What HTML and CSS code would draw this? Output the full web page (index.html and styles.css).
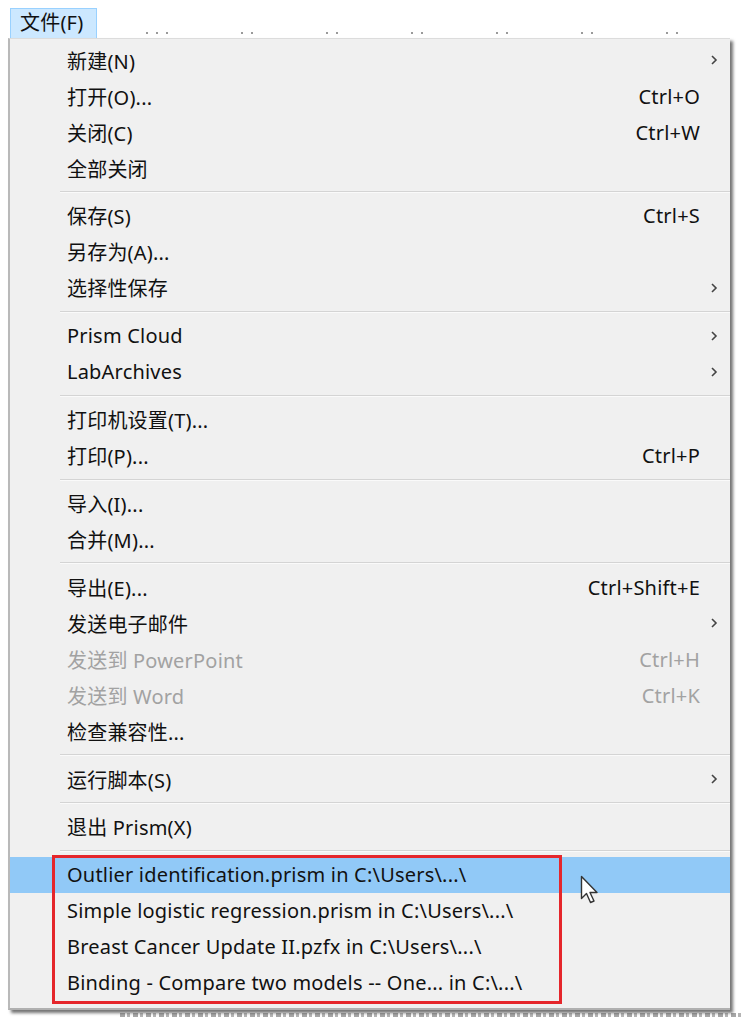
FILE: index.html
```html
<!DOCTYPE html>
<html lang="zh-CN">
<head>
    <meta charset="UTF-8">
    <title>文件菜单</title>
    <link rel="stylesheet" href="styles.css">
</head>
<body>
    <div class="menubar">
        <div class="tab">文件(F)</div>
        <div class="dots d1"><i></i><i></i><i></i></div>
        <div class="dots"><i></i><i></i></div>
        <div class="dots"><i></i><i></i></div>
        <div class="dots"><i></i><i></i></div>
        <div class="dots"><i></i><i></i></div>
        <div class="dots"><i></i><i></i></div>
        <div class="dots"><i></i><i></i></div>
    </div>

    <div class="menu">
        <div class="item"><span class="label">新建(N)</span><span class="key"></span><span class="sub"><svg viewBox="0 0 8 12"><path d="M2 2l4 4-4 4"/></svg></span></div>
        <div class="item"><span class="label">打开(O)...</span><span class="key">Ctrl+O</span><span class="sub"></span></div>
        <div class="item"><span class="label">关闭(C)</span><span class="key">Ctrl+W</span><span class="sub"></span></div>
        <div class="item"><span class="label">全部关闭</span><span class="key"></span><span class="sub"></span></div>
        <div class="sep"></div>
        <div class="item"><span class="label">保存(S)</span><span class="key">Ctrl+S</span><span class="sub"></span></div>
        <div class="item"><span class="label">另存为(A)...</span><span class="key"></span><span class="sub"></span></div>
        <div class="item"><span class="label">选择性保存</span><span class="key"></span><span class="sub"><svg viewBox="0 0 8 12"><path d="M2 2l4 4-4 4"/></svg></span></div>
        <div class="sep"></div>
        <div class="item"><span class="label">Prism Cloud</span><span class="key"></span><span class="sub"><svg viewBox="0 0 8 12"><path d="M2 2l4 4-4 4"/></svg></span></div>
        <div class="item"><span class="label">LabArchives</span><span class="key"></span><span class="sub"><svg viewBox="0 0 8 12"><path d="M2 2l4 4-4 4"/></svg></span></div>
        <div class="sep"></div>
        <div class="item"><span class="label">打印机设置(T)...</span><span class="key"></span><span class="sub"></span></div>
        <div class="item"><span class="label">打印(P)...</span><span class="key">Ctrl+P</span><span class="sub"></span></div>
        <div class="sep"></div>
        <div class="item"><span class="label">导入(I)...</span><span class="key"></span><span class="sub"></span></div>
        <div class="item"><span class="label">合并(M)...</span><span class="key"></span><span class="sub"></span></div>
        <div class="sep"></div>
        <div class="item"><span class="label">导出(E)...</span><span class="key">Ctrl+Shift+E</span><span class="sub"></span></div>
        <div class="item"><span class="label">发送电子邮件</span><span class="key"></span><span class="sub"><svg viewBox="0 0 8 12"><path d="M2 2l4 4-4 4"/></svg></span></div>
        <div class="item disabled"><span class="label">发送到 PowerPoint</span><span class="key">Ctrl+H</span><span class="sub"></span></div>
        <div class="item disabled"><span class="label">发送到 Word</span><span class="key">Ctrl+K</span><span class="sub"></span></div>
        <div class="item"><span class="label">检查兼容性...</span><span class="key"></span><span class="sub"></span></div>
        <div class="sep"></div>
        <div class="item"><span class="label">运行脚本(S)</span><span class="key"></span><span class="sub"><svg viewBox="0 0 8 12"><path d="M2 2l4 4-4 4"/></svg></span></div>
        <div class="sep"></div>
        <div class="item"><span class="label">退出 Prism(X)</span><span class="key"></span><span class="sub"></span></div>
        <div class="sep"></div>

        <div class="recent">
            <div class="item hover"><span class="label">Outlier identification.prism in C:\Users\...\</span></div>
            <div class="item"><span class="label">Simple logistic regression.prism in C:\Users\...\</span></div>
            <div class="item"><span class="label">Breast Cancer Update II.pzfx in C:\Users\...\</span></div>
            <div class="item"><span class="label">Binding - Compare two models -- One... in C:\...\</span></div>
            <!-- annotation box and mouse pointer over the list -->
            <div class="mark"></div>
            <svg class="cursor" viewBox="0 0 20 30">
                <path d="M1.5 1.5v22l5-5 4 9 3.5-1.5-4-8.5h7z"/>
            </svg>
        </div>
    </div>
    <div class="under"></div>
</body>
</html>
```

FILE: styles.css
```css
body {
    margin: 0;
    background: #fff;
    font-family: "Noto Sans", "Noto Sans CJK SC", sans-serif;
    font-size: 20px;
    letter-spacing: 0.2px;
    color: #111;
    width: 742px;
    height: 1023px;
    overflow: hidden;
}

.menubar {
    display: flex;
    align-items: flex-end;
    height: 38px;
    padding-left: 10px;
}

.tab {
    box-sizing: border-box;
    width: 87px;
    height: 30px;
    padding-left: 9px;
    line-height: 27px;
    background: #cce8ff;
    border: 1px solid #99d1ff;
    border-bottom: none;
}

.dots {
    display: flex;
    gap: 8px;
    margin-left: 73px;
    margin-bottom: 4px;
}

.dots.d1 {
    margin-left: 49px;
}

.dots i {
    width: 2px;
    height: 2px;
    background: #9a9a9a;
}

.menu {
    position: relative;
    margin-left: 8px;
    width: 722px;
    box-sizing: border-box;
    padding: 3px 0 7px;
    background: #f0f0f0;
    border-left: 2px solid #b9b9b9;
    border-top: 1px solid #dcdcdc;
    border-bottom: 2px solid #b0b0b0;
    box-shadow: 3px 3px 3px rgba(0, 0, 0, 0.55);
}

.item {
    display: flex;
    align-items: center;
    height: 36px;
    padding-left: 57px;
}

.item .label {
    flex: 1;
    white-space: nowrap;
}

.item .key {
    text-align: right;
}

.item .sub {
    width: 30px;
    display: flex;
    justify-content: flex-start;
    padding-left: 10px;
    box-sizing: border-box;
}

.sub svg {
    width: 8px;
    height: 12px;
    fill: none;
    stroke: #444;
    stroke-width: 1.6;
}

.item.disabled {
    color: #a2a2a2;
}

.sep {
    height: 1px;
    margin: 5px 0 5.85px 50px;
    background: #d4d4d4;
    box-shadow: 0 1px 0 #fafafa;
}

.recent {
    position: relative;
}

.item.hover {
    background: #91c9f7;
}

.mark {
    position: absolute;
    left: 42px;
    top: -2px;
    width: 510px;
    height: 149px;
    box-sizing: border-box;
    border: 3px solid #e5262b;
}

.cursor {
    position: absolute;
    left: 570px;
    top: 18px;
    width: 20px;
    height: 30px;
    fill: #fff;
    stroke: #333;
    stroke-width: 1.4;
    stroke-linejoin: round;
}

.under {
    margin: 3px 0 0 120px;
    height: 4px;
    opacity: 0.4;
    background: repeating-linear-gradient(90deg, #222 0 5px, transparent 5px 7px, #444 7px 10px, transparent 10px 13px);
}
```
